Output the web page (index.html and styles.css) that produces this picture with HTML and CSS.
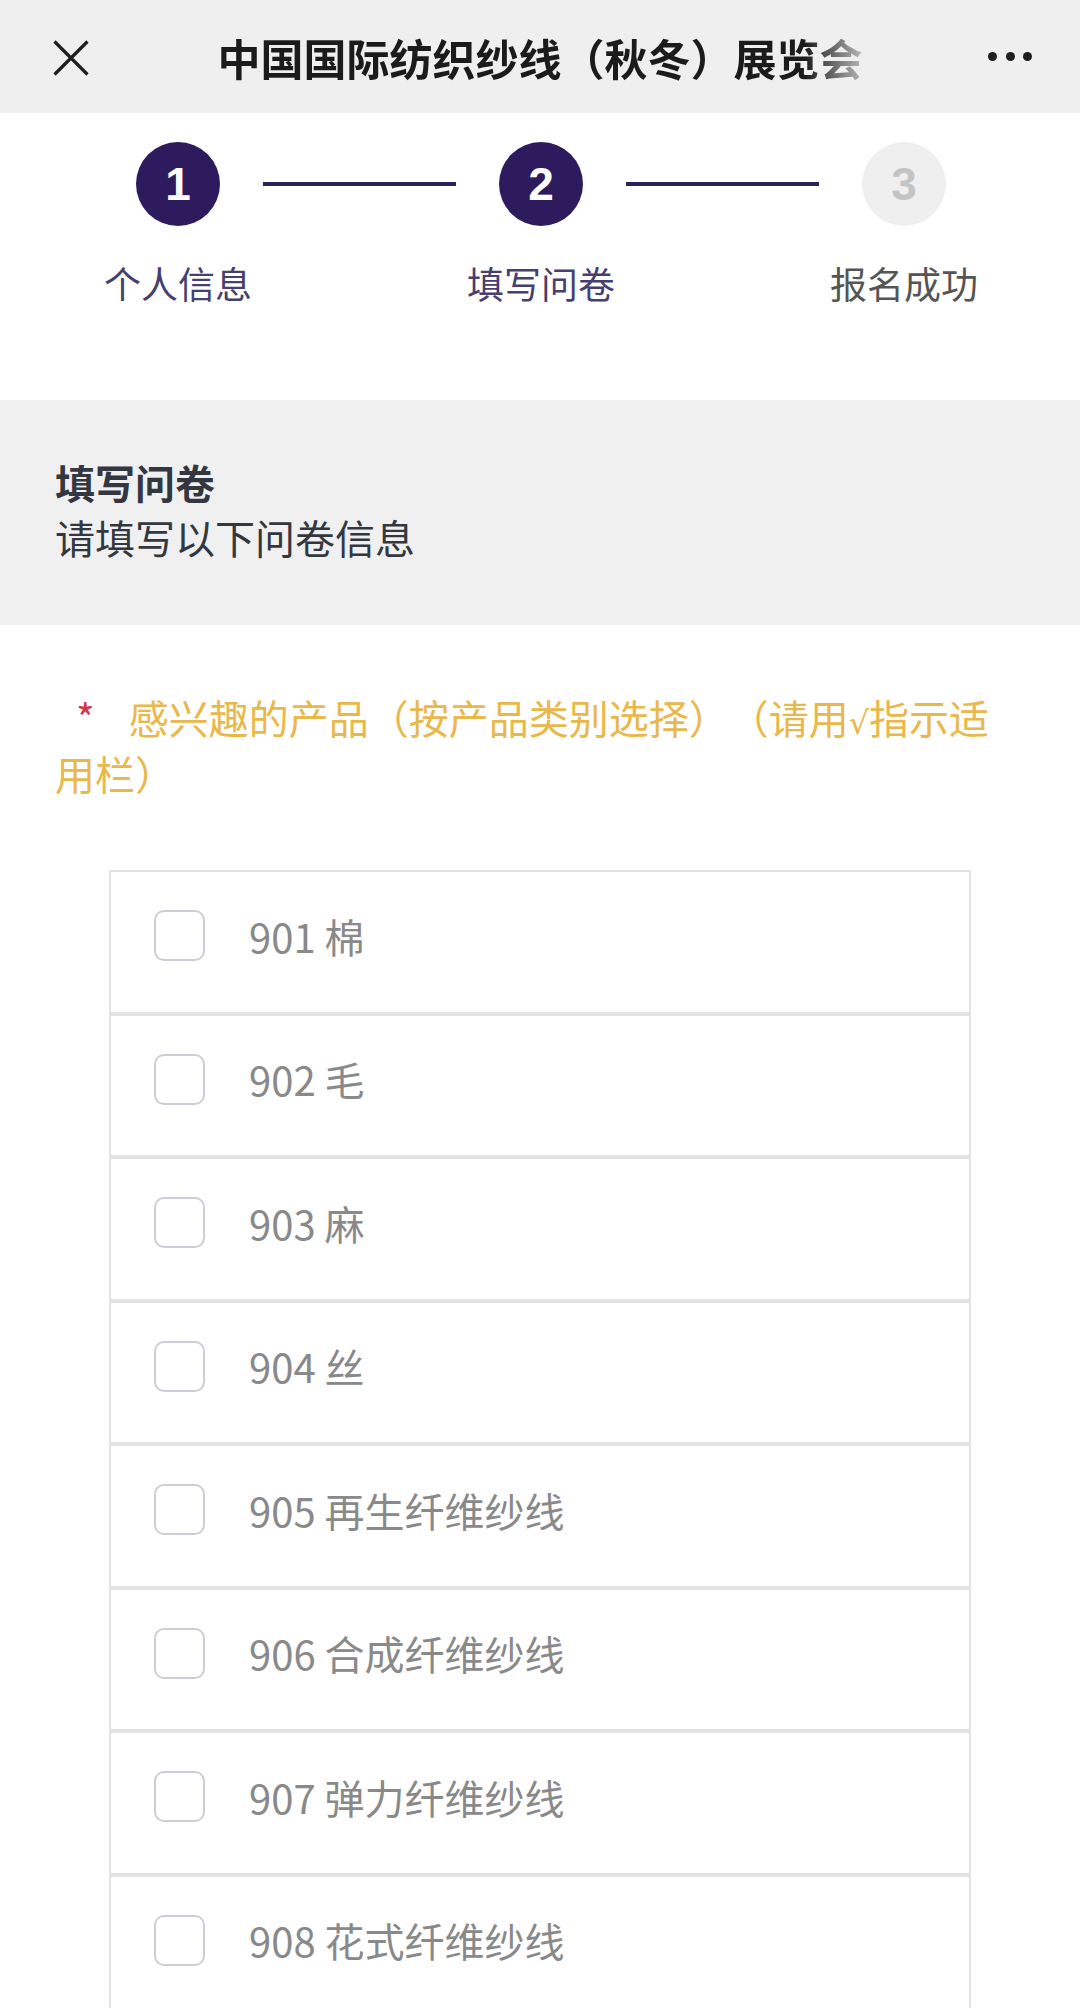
FILE: index.html
```html
<!DOCTYPE html>
<html lang="zh-CN">
<head>
<meta charset="utf-8">
<title>中国国际纺织纱线（秋冬）展览会</title>
<link rel="stylesheet" href="styles.css">
</head>
<body>
<header class="topbar">
  <div class="close">
    <svg width="36" height="36" viewBox="0 0 36 36"><path d="M1.5 1.5 L34.5 34.5 M34.5 1.5 L1.5 34.5" stroke="#1f1f1f" stroke-width="3.2" fill="none"/></svg>
  </div>
  <div class="title">中国国际纺织纱线（秋冬）展览会</div>
  <div class="more"><span></span><span></span><span></span></div>
</header>

<section class="stepper">
  <div class="step done">
    <div class="circle">1</div>
    <div class="label">个人信息</div>
  </div>
  <div class="line"></div>
  <div class="step done">
    <div class="circle">2</div>
    <div class="label">填写问卷</div>
  </div>
  <div class="line"></div>
  <div class="step todo">
    <div class="circle">3</div>
    <div class="label">报名成功</div>
  </div>
</section>

<section class="intro">
  <div class="intro-title">填写问卷</div>
  <div class="intro-sub">请填写以下问卷信息</div>
</section>

<section class="question">
  <div class="q-text"><span class="req">*</span>感兴趣的产品（按产品类别选择）（请用<span class="check">√</span>指示适用栏）</div>
</section>

<ul class="options">
  <li class="option"><span class="box"></span><span class="opt-label">901 棉</span></li>
  <li class="option"><span class="box"></span><span class="opt-label">902 毛</span></li>
  <li class="option"><span class="box"></span><span class="opt-label">903 麻</span></li>
  <li class="option"><span class="box"></span><span class="opt-label">904 丝</span></li>
  <li class="option"><span class="box"></span><span class="opt-label">905 再生纤维纱线</span></li>
  <li class="option"><span class="box"></span><span class="opt-label">906 合成纤维纱线</span></li>
  <li class="option"><span class="box"></span><span class="opt-label">907 弹力纤维纱线</span></li>
  <li class="option"><span class="box"></span><span class="opt-label">908 花式纤维纱线</span></li>
</ul>
</body>
</html>
```

FILE: styles.css
```css
* { box-sizing: border-box; }
html, body {
  margin: 0;
  padding: 0;
  background: #ffffff;
  font-family: "Noto Sans CJK SC", "Noto Sans", sans-serif;
  text-spacing-trim: space-all;
}

.topbar {
  height: 113px;
  background: #efefef;
  display: grid;
  grid-template-columns: 1fr auto 1fr;
  align-items: center;
}
.close {
  justify-self: start;
  margin-left: 53px;
  display: flex;
  margin-top: 2px;
}
.title {
  font-size: 43px;
  font-weight: 700;
  color: #1b1b1b;
  line-height: 56px;
  white-space: nowrap;
  -webkit-mask-image: linear-gradient(to right, #000 0, #000 91%, rgba(0,0,0,0.25) 100%);
  mask-image: linear-gradient(to right, #000 0, #000 91%, rgba(0,0,0,0.25) 100%);
}
.more {
  justify-self: end;
  margin-right: 48px;
  display: flex;
  gap: 8.5px;
}
.more span {
  width: 9px;
  height: 9px;
  border-radius: 50%;
  background: #1f1f1f;
}

.stepper {
  height: 287px;
  display: flex;
  align-items: flex-start;
  padding: 29px 0 0 136px;
}
.step {
  width: 84px;
  display: flex;
  flex-direction: column;
  align-items: center;
}
.circle {
  width: 84px;
  height: 84px;
  border-radius: 50%;
  display: flex;
  align-items: center;
  justify-content: center;
  font-family: "Liberation Sans", Arial, sans-serif;
  font-weight: 700;
  font-size: 46px;
  color: #ffffff;
  background: #2d1b5e;
}
.step.todo .circle {
  background: #efefef;
  color: #c4c4c4;
}
.label {
  margin-top: 33px;
  font-size: 37px;
  line-height: 48px;
  white-space: nowrap;
  color: #463f70;
}
.step.todo .label { color: #555555; }
.line {
  width: 193px;
  height: 3.5px;
  background: #2d2358;
  margin: 40px 43px 0;
}

.intro {
  background: #f0f0f0;
  padding: 55px 55px 60px;
  color: #333840;
}
.intro-title {
  font-size: 40px;
  font-weight: 700;
  line-height: 55px;
}
.intro-sub {
  font-size: 40px;
  line-height: 55px;
}

.question {
  padding: 64px 55px 69px;
}
.q-text {
  font-size: 40px;
  line-height: 56px;
  color: #e9b84b;
}
.req {
  display: inline-block;
  color: #d2354c;
  margin-left: 21px;
  margin-right: 34px;
}
.check {
  font-family: "DejaVu Sans", sans-serif;
  font-size: 32px;
  line-height: 0;
}

.options {
  list-style: none;
  margin: 0 109px;
  padding: 0;
}
.option {
  height: 143.5px;
  border: 2px solid #e3e3e3;
  display: flex;
  align-items: center;
  padding-left: 43px;
  padding-bottom: 12px;
}
.box {
  width: 51px;
  height: 51px;
  border: 2.5px solid #cbced4;
  border-radius: 10px;
  flex: none;
}
.opt-label {
  margin-left: 44px;
  font-size: 40px;
  line-height: 56px;
  color: #898989;
}
```
